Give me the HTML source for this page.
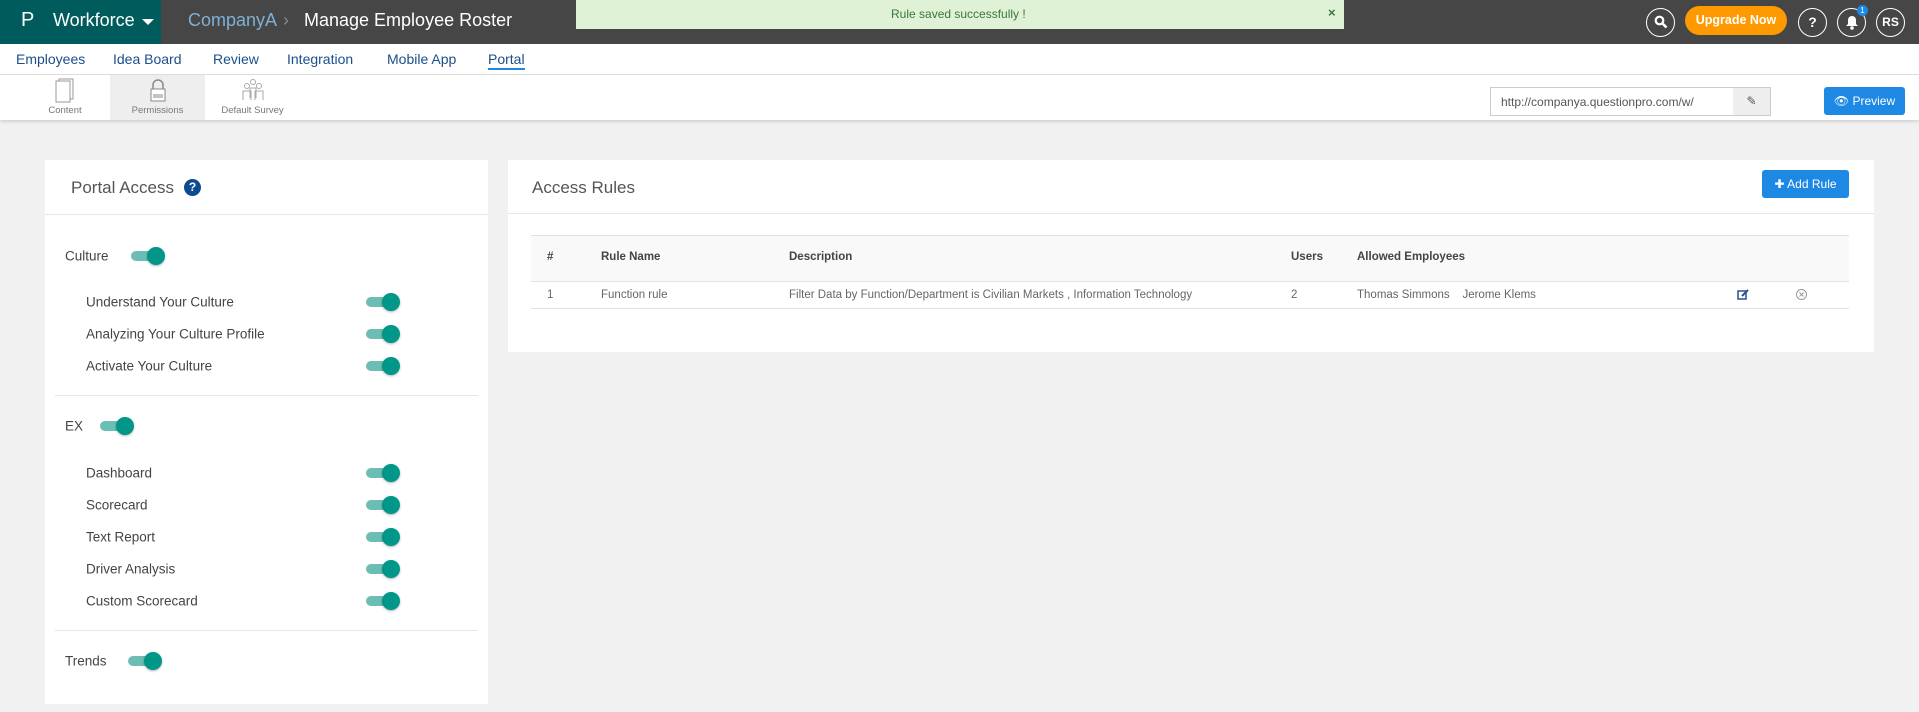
<!DOCTYPE html>
<html><head><meta charset="utf-8"><style>
*{box-sizing:border-box;margin:0;padding:0}
body{width:1919px;height:712px;overflow:hidden;background:#f1f1f1;font-family:"Liberation Sans",sans-serif;position:relative}
.abs{position:absolute}
.top{left:0;top:0;width:1919px;height:44px;background:#464646}
.logo{left:0;top:0;width:161px;height:44px;background:#005c5c;color:#fff}
.nav{left:0;top:44px;width:1919px;height:31px;background:#fff;border-bottom:1px solid #ddd}
.nav span{position:absolute;top:7px;font-size:14px;color:#1b4f8a}
.tabs{left:0;top:75px;width:1919px;height:45px;background:#fff;box-shadow:0 2px 3px rgba(0,0,0,.12)}
.tab{position:absolute;top:0;height:45px;text-align:center;font-size:9.5px;color:#777}
.panel{background:#fff}
.lbl{position:absolute;font-size:13.5px;color:#444;transform:translateY(-50%)}
.tg{position:absolute;width:32px;height:10px;border-radius:5px;background:#6cbdb3;transform:translateY(-50%)}
.tg:after{content:"";position:absolute;right:-2px;top:-4px;width:18px;height:18px;border-radius:50%;background:#009688;box-shadow:0 1px 2px rgba(0,0,0,.3)}
.circ{position:absolute;top:8px;width:29px;height:29px;border:1.5px solid #fff;border-radius:50%;color:#fff;font-weight:bold;font-size:14px;text-align:center;line-height:26px}
.th{position:absolute;top:251px;font-size:11.5px;font-weight:bold;color:#444}
.td{position:absolute;top:289px;font-size:11.5px;color:#666}
</style></head><body>
<div class="abs top"></div>
<div class="abs logo"><span class="abs" style="left:21px;top:9px;font-size:20px;font-weight:normal">P</span><span class="abs" style="left:53px;top:10px;font-size:18px">Workforce</span><span class="abs" style="left:142px;top:19px;border-left:6px solid transparent;border-right:6px solid transparent;border-top:6px solid #fff"></span></div>
<span class="abs" style="left:188px;top:10px;font-size:18px;color:#7fb0d6">CompanyA</span>
<span class="abs" style="left:283px;top:10px;font-size:18px;color:#888">›</span>
<span class="abs" style="left:304px;top:10px;font-size:18px;color:#fff">Manage Employee Roster</span>
<div class="abs" style="left:576px;top:0;width:768px;height:29px;background:#dff2d5"><span class="abs" style="left:315px;top:7px;font-size:12px;color:#3c763d">Rule saved successfully !</span><span class="abs" style="left:752px;top:5px;font-size:13px;font-weight:bold;color:#3c763d">×</span></div>
<div class="circ" style="left:1646px"><svg width="14" height="14" viewBox="0 0 14 14" style="margin-top:6px"><circle cx="5.5" cy="5.5" r="3.8" fill="none" stroke="#fff" stroke-width="2.2"/><path d="M8.5 8.5L12.5 12.5" stroke="#fff" stroke-width="2.6"/></svg></div>
<div class="abs" style="left:1685px;top:6px;width:102px;height:29px;border-radius:15px;background:#f90;color:#fff;font-size:12.5px;font-weight:bold;text-align:center;line-height:29px">Upgrade Now</div>
<div class="circ" style="left:1798px">?</div>
<div class="circ" style="left:1837px"><svg width="14" height="15" viewBox="0 0 14 15" style="margin-top:6px"><path d="M7 1a4 4 0 0 0-4 4v4l-2 2h12l-2-2V5a4 4 0 0 0-4-4z" fill="#fff"/><circle cx="7" cy="13" r="1.8" fill="#fff"/></svg></div>
<div class="abs" style="left:1857px;top:5px;width:11px;height:11px;border-radius:50%;background:#1e88e5;color:#fff;font-size:8px;text-align:center;line-height:11px">1</div>
<div class="circ" style="left:1876px;font-size:12px">RS</div>
<div class="abs nav"><span style="left:16px">Employees</span><span style="left:113px">Idea Board</span><span style="left:213px">Review</span><span style="left:287px">Integration</span><span style="left:387px">Mobile App</span><span style="left:488px;border-bottom:2px solid #1e88e5;padding-bottom:1px">Portal</span></div>
<div class="abs tabs">
<div class="tab" style="left:20px;width:90px"><svg width="22" height="26" viewBox="0 0 22 26" style="margin-top:3px"><rect x="5" y="1" width="14" height="20" fill="#fff" stroke="#999"/><rect x="2" y="3" width="14" height="21" fill="#fff" stroke="#999"/></svg><div style="margin-top:-2px">Content</div></div>
<div class="tab" style="left:110px;width:95px;background:#eee"><svg width="22" height="26" viewBox="0 0 22 26" style="margin-top:3px"><path d="M6 11V7a5 5 0 0 1 10 0v4" fill="none" stroke="#888" stroke-width="1.5"/><rect x="4" y="11" width="14" height="12" fill="#fff" stroke="#888"/><path d="M6 17h10M6 19h10" stroke="#888"/></svg><div style="margin-top:-2px">Permissions</div></div>
<div class="tab" style="left:205px;width:95px"><svg width="26" height="26" viewBox="0 0 26 26" style="margin-top:3px"><g fill="none" stroke="#aaa"><circle cx="13" cy="4" r="2.5"/><circle cx="7" cy="8" r="2.5"/><circle cx="19" cy="8" r="2.5"/><path d="M3 22v-9h8v9M15 22v-9h8v9M10 20v-10h6v10"/></g></svg><div style="margin-top:-2px">Default Survey</div></div>
<div class="abs" style="left:1490px;top:12px;width:281px;height:29px;border:1px solid #ccc;background:#fff"><span class="abs" style="left:10px;top:7px;font-size:12px;color:#555">http://companya.questionpro.com/w/</span><div class="abs" style="right:0;top:0;width:37px;height:27px;background:#eee;text-align:center;line-height:27px;font-size:12px;color:#555">&#9998;</div></div>
<div class="abs" style="left:1824px;top:12px;width:81px;height:28px;border-radius:3px;background:#1e88e5;color:#fff;font-size:12px;text-align:center;line-height:28px">&#128065; Preview</div>
</div>
<div class="abs panel" style="left:45px;top:160px;width:443px;height:544px">
<span class="abs" style="left:26px;top:18px;font-size:17px;color:#555">Portal Access</span>
<span class="abs" style="left:139px;top:19px;width:17px;height:17px;border-radius:50%;background:#0d4a8f;color:#fff;font-size:12px;font-weight:bold;text-align:center;line-height:17px">?</span>
<div class="abs" style="left:0;top:54px;width:443px;height:1px;background:#e6e6ee"></div>
<div class="abs" style="left:10px;top:235px;width:423px;height:1px;background:#e6e6ee"></div>
<div class="abs" style="left:10px;top:470px;width:423px;height:1px;background:#e6e6ee"></div>
<span class="lbl" style="left:20px;top:96px">Culture</span><span class="tg" style="left:86px;top:96px"></span>
<span class="lbl" style="left:41px;top:142px">Understand Your Culture</span><span class="tg" style="left:321px;top:142px"></span>
<span class="lbl" style="left:41px;top:174px">Analyzing Your Culture Profile</span><span class="tg" style="left:321px;top:174px"></span>
<span class="lbl" style="left:41px;top:206px">Activate Your Culture</span><span class="tg" style="left:321px;top:206px"></span>
<span class="lbl" style="left:20px;top:266px">EX</span><span class="tg" style="left:55px;top:266px"></span>
<span class="lbl" style="left:41px;top:313px">Dashboard</span><span class="tg" style="left:321px;top:313px"></span>
<span class="lbl" style="left:41px;top:345px">Scorecard</span><span class="tg" style="left:321px;top:345px"></span>
<span class="lbl" style="left:41px;top:377px">Text Report</span><span class="tg" style="left:321px;top:377px"></span>
<span class="lbl" style="left:41px;top:409px">Driver Analysis</span><span class="tg" style="left:321px;top:409px"></span>
<span class="lbl" style="left:41px;top:441px">Custom Scorecard</span><span class="tg" style="left:321px;top:441px"></span>
<span class="lbl" style="left:20px;top:501px">Trends</span><span class="tg" style="left:83px;top:501px"></span>
</div>
<div class="abs panel" style="left:508px;top:160px;width:1366px;height:192px"></div>
<span class="abs" style="left:532px;top:178px;font-size:17px;color:#555">Access Rules</span>
<div class="abs" style="left:1762px;top:170px;width:87px;height:28px;border-radius:3px;background:#1e88e5;color:#fff;font-size:12px;text-align:center;line-height:28px">✚ Add Rule</div>
<div class="abs" style="left:508px;top:213px;width:1366px;height:1px;background:#e6e6ee"></div>
<div class="abs" style="left:531px;top:235px;width:1318px;height:47px;background:#f9f9f9;border-top:1px solid #e3e3e3;border-bottom:1px solid #e3e3e3"></div>
<div class="abs" style="left:531px;top:308px;width:1318px;height:1px;background:#e3e3e3"></div>
<span class="th" style="left:547px">#</span><span class="th" style="left:601px">Rule Name</span><span class="th" style="left:789px">Description</span><span class="th" style="left:1291px">Users</span><span class="th" style="left:1357px">Allowed Employees</span>
<span class="td" style="left:547px">1</span><span class="td" style="left:601px">Function rule</span><span class="td" style="left:789px">Filter Data by Function/Department is Civilian Markets , Information Technology</span><span class="td" style="left:1291px">2</span><span class="td" style="left:1357px">Thomas Simmons &nbsp;&nbsp; Jerome Klems</span>
<svg class="abs" style="left:1737px;top:288px" width="13" height="13" viewBox="0 0 13 13"><rect x="1" y="3" width="8" height="8" fill="none" stroke="#2a4f8f" stroke-width="1.5"/><path d="M5 8L11 2" stroke="#2a4f8f" stroke-width="2"/></svg>
<svg class="abs" style="left:1795px;top:288px" width="13" height="13" viewBox="0 0 13 13"><circle cx="6.5" cy="6.5" r="5" fill="none" stroke="#999"/><path d="M4.5 4.5l4 4M8.5 4.5l-4 4" stroke="#999"/></svg>
</body></html>
